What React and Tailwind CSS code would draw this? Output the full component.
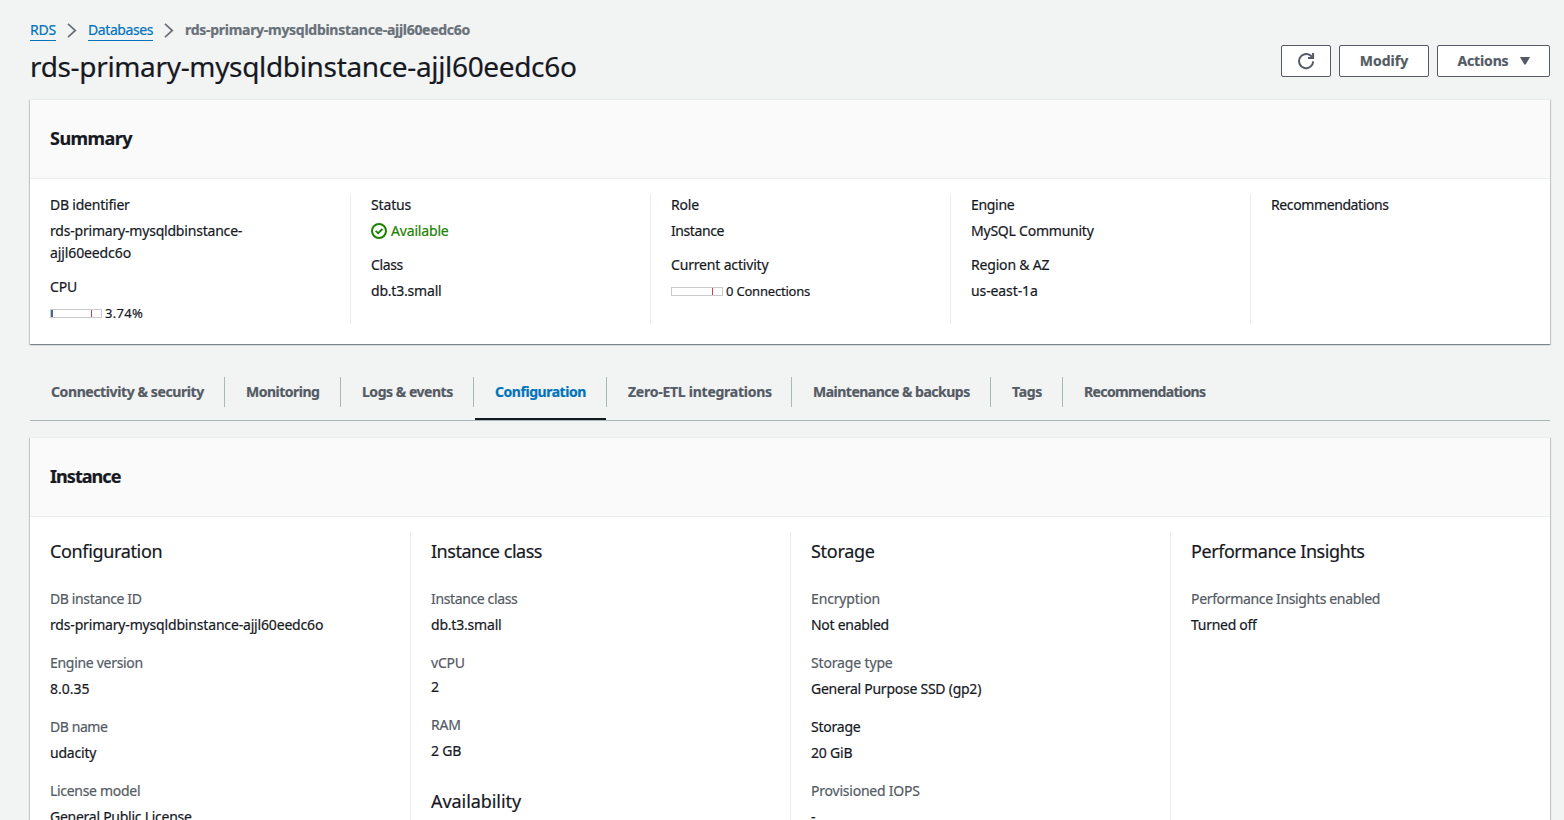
import React from 'react';

function Chevron() {
  return (
    <svg className="mx-[11px] h-[15px] w-[10px] shrink-0" viewBox="0 0 10 15" fill="none" stroke="#687078" strokeWidth="1.7">
      <path d="M1 0.8 L8.3 7.5 L1 14.2" />
    </svg>
  );
}

function Refresh() {
  return (
    <svg className="h-[18px] w-[18px]" viewBox="0 0 18 18" fill="none" stroke="#545b64" strokeWidth="2">
      <path d="M16.2 9.4 A7.1 7.1 0 1 1 13.6 3.6 L16 6" />
      <path d="M16.1 1 V6.1 H11" />
    </svg>
  );
}

function Check() {
  return (
    <svg className="mr-1 h-4 w-4 shrink-0" viewBox="0 0 16 16" fill="none" stroke="#1d8102" strokeWidth="2">
      <circle cx="8" cy="8" r="7" />
      <path d="M4.6 7.8 L7.2 10.2 L11.4 6" strokeWidth="1.8" />
    </svg>
  );
}

function Meter({ filled, children }) {
  return (
    <div className="flex h-[22px] items-center text-[13px]">
      <div className="mr-[3px] flex h-[9px] w-[52px] justify-between border border-[#c8cacc]">
        <div className={filled ? 'w-[2px] bg-[#47698c]' : 'w-[2px]'} />
        <div className="mr-[9px] w-px bg-[#d13f4a]" />
      </div>
      {children}
    </div>
  );
}

function Field({ label, labelTrack = 'tracking-[-0.22px]', muted, children }) {
  return (
    <div>
      <div className={labelTrack + (muted ? ' mb-1 text-[#545b64]' : ' mb-1')}>{label}</div>
      {children}
    </div>
  );
}

function Val({ t = 'tracking-[-0.2px]', children }) {
  return <div className={t}>{children}</div>;
}

function Panel({ title, track, className, children }) {
  return (
    <section className={'bg-white shadow-[0_1px_1px_0_rgba(0,28,36,0.3),1px_1px_1px_0_rgba(0,28,36,0.15),-1px_1px_1px_0_rgba(0,28,36,0.15)] ' + className}>
      <header className="flex h-[80px] items-center border-t border-b border-[#eaeded] bg-[#fafafa] px-5 pb-0.5">
        <h2 className={'text-[18px] leading-[22px] font-bold ' + track}>{title}</h2>
      </header>
      {children}
    </section>
  );
}

const tabs = [
  ['Connectivity & security', 'w-[195px]', 'tracking-[-0.4px]'],
  ['Monitoring', 'w-[116px]', 'tracking-[-0.51px]'],
  ['Logs & events', 'w-[133px]', 'tracking-[-0.47px]'],
  ['Configuration', 'w-[133px]', 'tracking-[-0.46px]'],
  ['Zero-ETL integrations', 'w-[185px]', 'tracking-[-0.25px]'],
  ['Maintenance & backups', 'w-[199px]', 'tracking-[-0.51px]'],
  ['Tags', 'w-[72px]', 'tracking-[-0.3px]'],
  ['Recommendations', 'w-[164px]', 'tracking-[-0.61px]'],
];

export default function App() {
  const btn = 'flex h-8 items-center justify-center rounded-[2px] border border-[#545b64] bg-white font-bold text-[#545b64]';
  const col = 'border-l border-[#eaeded] pl-5';
  const h3 = 'text-[18px] leading-[22px]';
  return (
    <div className="h-[820px] overflow-hidden bg-[#f2f3f3] pr-[14px] pl-[30px] font-['Noto_Sans',sans-serif] text-[14px] leading-[22px] text-[#16191f] [-webkit-text-stroke-width:0.2px]">
      <div className="flex h-[99px] justify-between">
        <div className="pt-[19px]">
          <nav className="flex h-[22px] items-center">
            <a className="h-[21px] border-b border-[#0073bb] leading-[20px] tracking-[-0.2px] text-[#0073bb]">RDS</a>
            <Chevron />
            <a className="h-[21px] border-b border-[#0073bb] leading-[20px] tracking-[-0.42px] text-[#0073bb]">Databases</a>
            <Chevron />
            <span className="font-bold tracking-[-0.28px] text-[#687078]">rds-primary-mysqldbinstance-ajjl60eedc6o</span>
          </nav>
          <h1 className="mt-[7px] text-[28px] leading-[36px] tracking-[-0.34px]">rds-primary-mysqldbinstance-ajjl60eedc6o</h1>
        </div>
        <div className="flex gap-2 pt-[45px]">
          <button className={btn + ' w-[50px]'}><Refresh /></button>
          <button className={btn + ' w-[90px]'}>Modify</button>
          <button className={btn + ' w-[113px] tracking-[-0.15px]'}>
            Actions
            <svg className="ml-[11px] h-2 w-[10px]" viewBox="0 0 10 8" fill="#545b64"><path d="M0 0 H10 L6 7 Q5 8.4 4 7 Z" /></svg>
          </button>
        </div>
      </div>

      <Panel title="Summary" track="tracking-[-0.54px]" className="h-[245px]">
        <div className="flex h-[145px] pt-[15px]">
          <div className="flex w-[320px] flex-col gap-3 pl-5">
            <Field label="DB identifier">
              <Val>rds-primary-mysqldbinstance-</Val>
              <Val t="tracking-[-0.11px]">ajjl60eedc6o</Val>
            </Field>
            <Field label="CPU"><Meter filled><span className="tracking-[0.28px]">3.74%</span></Meter></Field>
          </div>
          <div className={'flex w-[300px] flex-col gap-3 ' + col}>
            <Field label="Status" labelTrack="tracking-[-0.15px]">
              <div className="flex items-center tracking-[-0.17px] text-[#1d8102]"><Check />Available</div>
            </Field>
            <Field label="Class" labelTrack="tracking-[-0.35px]"><Val>db.t3.small</Val></Field>
          </div>
          <div className={'flex w-[300px] flex-col gap-3 ' + col}>
            <Field label="Role"><Val t="tracking-[-0.42px]">Instance</Val></Field>
            <Field label="Current activity" labelTrack="tracking-[-0.17px]">
              <Meter><span className="tracking-[-0.2px]">0 Connections</span></Meter>
            </Field>
          </div>
          <div className={'flex w-[300px] flex-col gap-3 ' + col}>
            <Field label="Engine" labelTrack="tracking-[-0.32px]"><Val t="tracking-[-0.23px]">MySQL Community</Val></Field>
            <Field label="Region & AZ" labelTrack="tracking-[-0.18px]"><Val t="tracking-[-0.1px]">us-east-1a</Val></Field>
          </div>
          <div className={'w-[300px] ' + col}>
            <Field label="Recommendations" labelTrack="tracking-[-0.39px]" />
          </div>
        </div>
      </Panel>

      <div className="mt-[27px] flex h-[50px] border-b border-[#aab7b8]">
        {tabs.map(([name, w, track], i) => (
          <div key={name} className={'flex flex-col justify-between pt-[6px] font-bold ' + w + ' ' + track}>
            <div className={'h-[30px] pl-[21px] leading-[30px] whitespace-nowrap ' + (i < 7 ? 'border-r border-[#aab7b8] ' : '') + (i === 3 ? 'text-[#0073bb]' : 'text-[#545b64]')}>{name}</div>
            {i === 3 && <div className="mr-px ml-px h-[2px] bg-[#16191f]" />}
          </div>
        ))}
      </div>

      <Panel title="Instance" track="tracking-[-0.95px]" className="mt-4 h-[500px]">
        <div className="flex h-[420px] pt-[15px]">
          <div className="w-[380px] pt-2 pl-5">
            <h3 className={h3 + ' tracking-[-0.35px]'}>Configuration</h3>
            <div className="mt-[26px] flex flex-col gap-4">
              <Field muted label="DB instance ID" labelTrack="tracking-[-0.37px]"><Val t="tracking-[-0.17px]">rds-primary-mysqldbinstance-ajjl60eedc6o</Val></Field>
              <Field muted label="Engine version" labelTrack="tracking-[-0.3px]"><Val t="tracking-[-0.02px]">8.0.35</Val></Field>
              <Field muted label="DB name" labelTrack="tracking-[-0.42px]"><Val>udacity</Val></Field>
              <Field muted label="License model" labelTrack="tracking-[-0.3px]"><Val t="tracking-[-0.26px]">General Public License</Val></Field>
            </div>
          </div>
          <div className={'w-[380px] pt-2 ' + col}>
            <h3 className={h3 + ' tracking-[-0.48px]'}>Instance class</h3>
            <div className="mt-[26px] flex flex-col gap-4">
              <Field muted label="Instance class" labelTrack="tracking-[-0.37px]"><Val>db.t3.small</Val></Field>
              <Field muted label="vCPU"><div className="-mt-0.5">2</div></Field>
              <Field muted label="RAM"><Val>2 GB</Val></Field>
            </div>
            <h3 className={h3 + ' mt-7 tracking-[-0.06px]'}>Availability</h3>
          </div>
          <div className={'w-[380px] pt-2 ' + col}>
            <h3 className={h3 + ' tracking-[-0.28px]'}>Storage</h3>
            <div className="mt-[26px] flex flex-col gap-4">
              <Field muted label="Encryption" labelTrack="tracking-[-0.15px]"><Val t="tracking-[-0.28px]">Not enabled</Val></Field>
              <Field muted label="Storage type" labelTrack="tracking-[-0.15px]"><Val t="tracking-[-0.25px]">General Purpose SSD (gp2)</Val></Field>
              <Field label="Storage"><Val>20 GiB</Val></Field>
              <Field muted label="Provisioned IOPS"><Val>-</Val></Field>
            </div>
          </div>
          <div className={'w-[380px] pt-2 ' + col}>
            <h3 className={h3 + ' tracking-[-0.44px]'}>Performance Insights</h3>
            <div className="mt-[26px]">
              <Field muted label="Performance Insights enabled" labelTrack="tracking-[-0.34px]"><Val t="tracking-[-0.28px]">Turned off</Val></Field>
            </div>
          </div>
        </div>
      </Panel>
    </div>
  );
}
